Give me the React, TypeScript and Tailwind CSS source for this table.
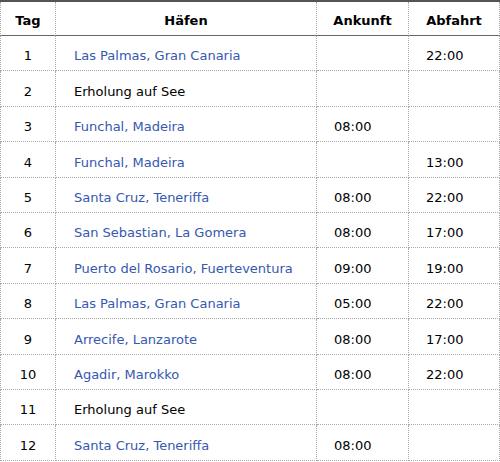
const rows = [
  { tag: '1', port: 'Las Palmas, Gran Canaria', link: true, an: '', ab: '22:00' },
  { tag: '2', port: 'Erholung auf See', link: false, an: '', ab: '' },
  { tag: '3', port: 'Funchal, Madeira', link: true, an: '08:00', ab: '' },
  { tag: '4', port: 'Funchal, Madeira', link: true, an: '', ab: '13:00' },
  { tag: '5', port: 'Santa Cruz, Teneriffa', link: true, an: '08:00', ab: '22:00' },
  { tag: '6', port: 'San Sebastian, La Gomera', link: true, an: '08:00', ab: '17:00' },
  { tag: '7', port: 'Puerto del Rosario, Fuerteventura', link: true, an: '09:00', ab: '19:00' },
  { tag: '8', port: 'Las Palmas, Gran Canaria', link: true, an: '05:00', ab: '22:00' },
  { tag: '9', port: 'Arrecife, Lanzarote', link: true, an: '08:00', ab: '17:00' },
  { tag: '10', port: 'Agadir, Marokko', link: true, an: '08:00', ab: '22:00' },
  { tag: '11', port: 'Erholung auf See', link: false, an: '', ab: '' },
  { tag: '12', port: 'Santa Cruz, Teneriffa', link: true, an: '08:00', ab: '' },
];

export default function App() {
  return (
    <div className="w-[500px] bg-white font-['DejaVu_Sans',Verdana,sans-serif] text-[13px] text-black">
      <table className="w-[500px] table-fixed border-separate border-spacing-0 border-t-2 border-[#555]">
        <colgroup>
          <col className="w-[56px]" />
          <col className="w-[261px]" />
          <col className="w-[92px]" />
          <col className="w-[91px]" />
        </colgroup>
        <thead>
          <tr className="h-[34px]">
            <th className="border-l border-r border-b border-dotted border-[#aaa] border-b-[#666] [border-bottom-style:solid] font-bold text-center pt-[5px]">
              Tag
            </th>
            <th className="border-r border-b border-dotted border-[#aaa] border-b-[#666] [border-bottom-style:solid] font-bold text-center pt-[5px]">
              Häfen
            </th>
            <th className="border-r border-b border-dotted border-[#aaa] border-b-[#666] [border-bottom-style:solid] font-bold text-center pt-[5px]">
              Ankunft
            </th>
            <th className="border-r border-b border-dotted border-[#aaa] border-b-[#666] [border-bottom-style:solid] font-bold text-center pt-[5px]">
              Abfahrt
            </th>
          </tr>
        </thead>
        <tbody>
          {rows.map((r, i) => (
            <tr key={i} className="h-[35.4px]">
              <td className="border-l border-r border-b border-dotted border-[#aaa] text-center pt-[6px]">{r.tag}</td>
              <td
                className={`border-r border-b border-dotted border-[#aaa] pl-[18px] pt-[6px] ${r.link ? 'text-[#3558b0]' : ''}`}
              >
                {r.port}
              </td>
              <td className="border-r border-b border-dotted border-[#aaa] pl-[17px] pt-[6px]">{r.an}</td>
              <td className="border-r border-b border-dotted border-[#aaa] pl-[17px] pt-[6px]">{r.ab}</td>
            </tr>
          ))}
        </tbody>
      </table>
    </div>
  );
}
